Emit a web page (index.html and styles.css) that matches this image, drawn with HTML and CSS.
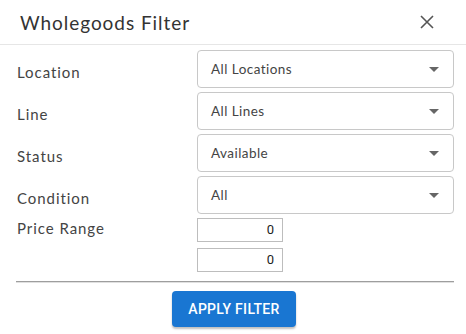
FILE: index.html
```html
<!DOCTYPE html>
<html>
<head>
<meta charset="utf-8">
<link rel="stylesheet" href="styles.css">
</head>
<body>
<div class="dialog">
  <div class="header">
    <h1 class="title">Wholegoods Filter</h1>
    <button class="close" aria-label="Close">
      <svg width="14" height="14" viewBox="0 0 14 14"><path d="M1 1 L13 13 M13 1 L1 13" stroke="#555" stroke-width="1.6" fill="none"/></svg>
    </button>
  </div>
  <div class="body">
    <div class="form">
      <label class="label">Location</label>
      <div class="select"><span>All Locations</span><span class="caret"></span></div>
      <label class="label">Line</label>
      <div class="select"><span>All Lines</span><span class="caret"></span></div>
      <label class="label">Status</label>
      <div class="select"><span>Available</span><span class="caret"></span></div>
      <label class="label">Condition</label>
      <div class="select"><span>All</span><span class="caret"></span></div>
      <label class="label label-price">Price Range</label>
      <div class="range">
        <div class="num">0</div>
        <div class="num">0</div>
      </div>
    </div>
    <div class="divider"></div>
    <div class="actions">
      <button class="apply">APPLY FILTER</button>
    </div>
  </div>
</div>
</body>
</html>
```
FILE: styles.css
```css
html, body {
  margin: 0;
  padding: 0;
  background: #fff;
}
body {
  font-family: "Lato", "Open Sans", sans-serif;
  color: #444;
}
.dialog {
  width: 466px;
  height: 334px;
  background: #fff;
}
.header {
  height: 45px;
  border-bottom: 1px solid #e6e6e6;
  display: flex;
  align-items: center;
  justify-content: space-between;
  padding: 0 32px 0 20px;
  box-sizing: border-box;
}
.title {
  margin: 0;
  font-size: 19px;
  font-weight: 400;
  color: #333;
  letter-spacing: 0.95px;
}
.close {
  border: 0;
  background: none;
  padding: 0;
  width: 14px;
  height: 14px;
  display: flex;
}
.body {
  padding: 5px 12px 0 16px;
}
.form {
  display: grid;
  grid-template-columns: 181px 1fr;
  row-gap: 4px;
}
.label {
  font-size: 15px;
  color: #444;
  letter-spacing: 0.95px;
  display: flex;
  align-items: center;
  padding-top: 5px;
  padding-left: 1px;
}
.label-price {
  align-items: flex-start;
  padding-top: 1px;
}
.select {
  height: 38px;
  box-sizing: border-box;
  border: 1px solid #c8c8c8;
  border-radius: 4px;
  display: flex;
  align-items: center;
  justify-content: space-between;
  padding: 0 14px 0 13px;
  font-size: 13.5px;
  letter-spacing: 0.45px;
  color: #444;
}
.caret {
  width: 0;
  height: 0;
  border-left: 5px solid transparent;
  border-right: 5px solid transparent;
  border-top: 5px solid #666;
}
.range {
  display: flex;
  flex-direction: column;
  gap: 6px;
}
.num {
  width: 86px;
  height: 24px;
  box-sizing: border-box;
  border: 1px solid #bdbdbd;
  font-family: "Roboto", sans-serif;
  font-size: 13px;
  color: #222;
  text-align: right;
  padding: 0 8px;
  line-height: 22px;
}
.divider {
  height: 1px;
  background: #9e9e9e;
  margin-top: 9px;
  box-shadow: 0 1px 0 #e0e0e0;
}
.actions {
  display: flex;
  justify-content: center;
  padding-top: 9px;
  padding-right: 2px;
}
.apply {
  width: 124px;
  height: 36px;
  border: 0;
  border-radius: 4px;
  background: #1976d2;
  color: #fff;
  font-family: "Roboto", sans-serif;
  font-weight: 500;
  font-size: 14px;
  letter-spacing: 0.3px;
  box-shadow: 0 2px 2px rgba(0,0,0,0.25);
}
```
